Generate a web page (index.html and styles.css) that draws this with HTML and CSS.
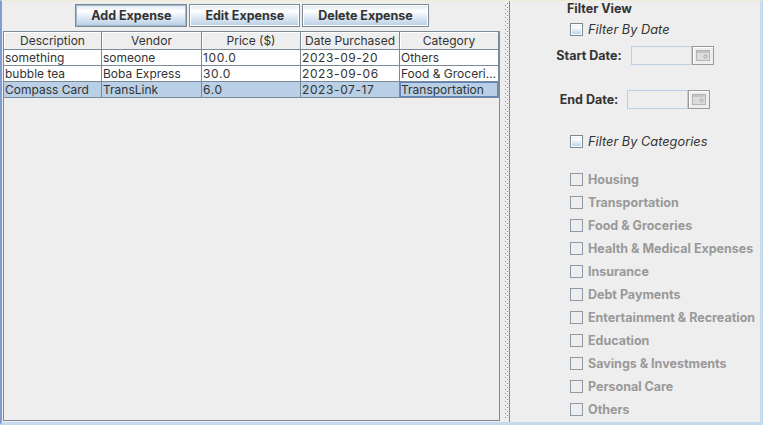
FILE: index.html
```html
<!DOCTYPE html>
<html>
<head>
<meta charset="utf-8">
<link rel="stylesheet" href="styles.css">
</head>
<body>
<div class="window">
  <div class="left">
    <div class="toolbar">
      <button class="btn focused">Add Expense</button>
      <button class="btn">Edit Expense</button>
      <button class="btn">Delete Expense</button>
    </div>
    <div class="scroll">
      <table class="grid">
        <colgroup>
          <col class="c1"><col class="c2"><col class="c3"><col class="c4"><col class="c5">
        </colgroup>
        <thead>
          <tr><th>Description</th><th>Vendor</th><th>Price ($)</th><th>Date Purchased</th><th>Category</th></tr>
        </thead>
        <tbody>
          <tr><td>something</td><td>someone</td><td class="num">100.0</td><td class="num">2023-09-20</td><td>Others</td></tr>
          <tr><td>bubble tea</td><td>Boba Express</td><td class="num">30.0</td><td class="num">2023-09-06</td><td>Food &amp; Groceries</td></tr>
          <tr class="sel"><td>Compass Card</td><td>TransLink</td><td class="num">6.0</td><td class="num">2023-07-17</td><td class="focus">Transportation</td></tr>
        </tbody>
      </table>
    </div>
  </div>
  <div class="divider">
    <svg width="8" height="100%" class="bumps">
      <defs>
        <pattern id="dots" width="4" height="4" patternUnits="userSpaceOnUse">
          <rect x="0" y="0" width="1" height="1" fill="#8a8a8a"/>
          <rect x="2" y="2" width="1" height="1" fill="#8a8a8a"/>
        </pattern>
      </defs>
      <rect x="4" y="2" width="4" height="416" fill="url(#dots)"/>
    </svg>
  </div>
  <div class="right">
    <div class="title">Filter View</div>
    <div class="check on first"><span class="box"></span><span class="ital">Filter By Date</span></div>
    <div class="daterow start">
      <span class="lbl">Start Date:</span>
      <span class="field"></span>
      <span class="calbtn">
        <svg width="14" height="11" viewBox="0 0 14 11"><rect x="0.5" y="0.5" width="13" height="10" fill="#dcdcdc" stroke="#b4b4b4"/><rect x="1" y="1" width="12" height="2" fill="#c4c4c4"/><circle cx="9.5" cy="6.5" r="1.6" fill="none" stroke="#a8a8a8"/></svg>
      </span>
    </div>
    <div class="daterow end">
      <span class="lbl">End Date:</span>
      <span class="field"></span>
      <span class="calbtn">
        <svg width="14" height="11" viewBox="0 0 14 11"><rect x="0.5" y="0.5" width="13" height="10" fill="#dcdcdc" stroke="#b4b4b4"/><rect x="1" y="1" width="12" height="2" fill="#c4c4c4"/><circle cx="9.5" cy="6.5" r="1.6" fill="none" stroke="#a8a8a8"/></svg>
      </span>
    </div>
    <div class="check on cathead"><span class="box"></span><span class="ital">Filter By Categories</span></div>
    <ul class="cats">
      <li class="check"><span class="box"></span><span>Housing</span></li>
      <li class="check"><span class="box"></span><span>Transportation</span></li>
      <li class="check"><span class="box"></span><span>Food &amp; Groceries</span></li>
      <li class="check"><span class="box"></span><span>Health &amp; Medical Expenses</span></li>
      <li class="check"><span class="box"></span><span>Insurance</span></li>
      <li class="check"><span class="box"></span><span>Debt Payments</span></li>
      <li class="check"><span class="box"></span><span>Entertainment &amp; Recreation</span></li>
      <li class="check"><span class="box"></span><span>Education</span></li>
      <li class="check"><span class="box"></span><span>Savings &amp; Investments</span></li>
      <li class="check"><span class="box"></span><span>Personal Care</span></li>
      <li class="check"><span class="box"></span><span>Others</span></li>
    </ul>
  </div>
</div>
</body>
</html>
```
FILE: styles.css
```css
html, body {
  margin: 0;
  padding: 0;
  background: #eeeeee;
}
body {
  font-family: Inter, "DejaVu Sans", sans-serif;
  font-size: 12px;
  color: #333333;
}
.window {
  box-sizing: border-box;
  width: 763px;
  height: 425px;
  border-top: 1px solid #f1ebd2;
  border-left: 2px solid #7f9cd3;
  border-right: 3px solid #c6dbf0;
  border-bottom: 3px solid #c6dbf0;
  display: flex;
  background: #eeeeee;
}
.left {
  width: 499px;
  display: flex;
  flex-direction: column;
}
.toolbar {
  height: 30px;
  box-sizing: border-box;
  padding-top: 3px;
  display: flex;
  justify-content: center;
  gap: 2px;
  padding-left: 1px;
}
.btn {
  height: 23px;
  box-sizing: border-box;
  padding: 0 15px;
  border: 1px solid #7a8a99;
  box-shadow: inset 0 0 0 1px #ffffff;
  background: linear-gradient(#dde8f3 0%, #ffffff 30%, #dde8f3 60%, #b8cfe5 100%);
  font-family: Inter, "DejaVu Sans", sans-serif;
  font-size: 12.5px;
  font-weight: bold;
  color: #333333;
  margin: 0;
}
.btn.focused {
  box-shadow: inset 0 0 0 1px #a3b8cc;
}
.scroll {
  margin-left: 1px;
  width: 497px;
  height: 390px;
  box-sizing: border-box;
  border: 1px solid #7a8a99;
  background: #eeeeee;
  overflow: hidden;
}
.grid {
  border-collapse: separate;
  border-spacing: 0;
  table-layout: fixed;
  width: 495px;
}
.c1 { width: 98px; }
.c2 { width: 100px; }
.c3 { width: 99px; }
.c4 { width: 99px; }
.c5 { width: 99px; }
.grid th {
  box-sizing: border-box;
  height: 18px;
  padding: 0;
  font-weight: normal;
  text-align: center;
  line-height: 16px;
  background: #eeeeee;
  border-right: 1px solid #7a8a99;
  border-bottom: 1px solid #7a8a99;
  box-shadow: inset 1px 1px 0 #ffffff;
  white-space: nowrap;
}
.grid td {
  box-sizing: border-box;
  height: 16px;
  padding: 0 0 0 1px;
  line-height: 15px;
  background: #ffffff;
  border-right: 1px solid #7a8a99;
  border-bottom: 1px solid #7a8a99;
  white-space: nowrap;
  overflow: hidden;
  text-overflow: ellipsis;
}
.grid td.num {
  letter-spacing: 0.6px;
}
.grid tr.sel td {
  background: #b8cfe5;
}
.grid td.focus {
  box-shadow: inset 0 0 0 1px #6382bf;
}
.divider {
  width: 9px;
  box-sizing: border-box;
  border-right: 1px solid #7a8a99;
  display: flex;
}
.bumps {
  display: block;
}
.right {
  width: 250px;
  display: flex;
  flex-direction: column;
}
.title {
  font-weight: bold;
  font-size: 12.5px;
  height: 16px;
  line-height: 16px;
  margin-left: 57px;
}
.check {
  display: flex;
  align-items: center;
  gap: 5px;
  height: 17px;
  white-space: nowrap;
}
.check.first {
  margin-top: 4px;
  margin-left: 60px;
}
.check.cathead {
  margin-top: 24px;
  margin-left: 60px;
}
.box {
  width: 13px;
  height: 13px;
  box-sizing: border-box;
  border: 1px solid #8d99a6;
  flex: none;
}
.check.on .box {
  border-color: #7a8a99;
  box-shadow: inset 0 0 0 1px #ffffff;
  background: linear-gradient(#dde8f3 0%, #ffffff 30%, #dde8f3 60%, #b8cfe5 100%);
}
.ital {
  font-style: italic;
  font-size: 12.8px;
}
.daterow {
  display: flex;
  justify-content: center;
  align-items: center;
  height: 19px;
}
.daterow.start {
  margin-top: 8px;
}
.daterow.end {
  margin-top: 25px;
}
.lbl {
  font-weight: bold;
  font-size: 12.5px;
  margin-right: 9px;
}
.field {
  width: 61px;
  height: 19px;
  box-sizing: border-box;
  border: 1px solid #b8cfe5;
  background: #eeeeee;
}
.calbtn {
  width: 22px;
  height: 19px;
  box-sizing: border-box;
  border: 1px solid #9a9a9a;
  box-shadow: inset 1px 1px 0 #ffffff;
  background: #eeeeee;
  display: flex;
  align-items: center;
  justify-content: center;
}
.calbtn svg {
  display: block;
}
.cats {
  list-style: none;
  margin: 18px 0 0 60px;
  padding: 0;
}
.cats .check {
  height: 23px;
  font-weight: bold;
  font-size: 12.5px;
  color: #999999;
}
```
